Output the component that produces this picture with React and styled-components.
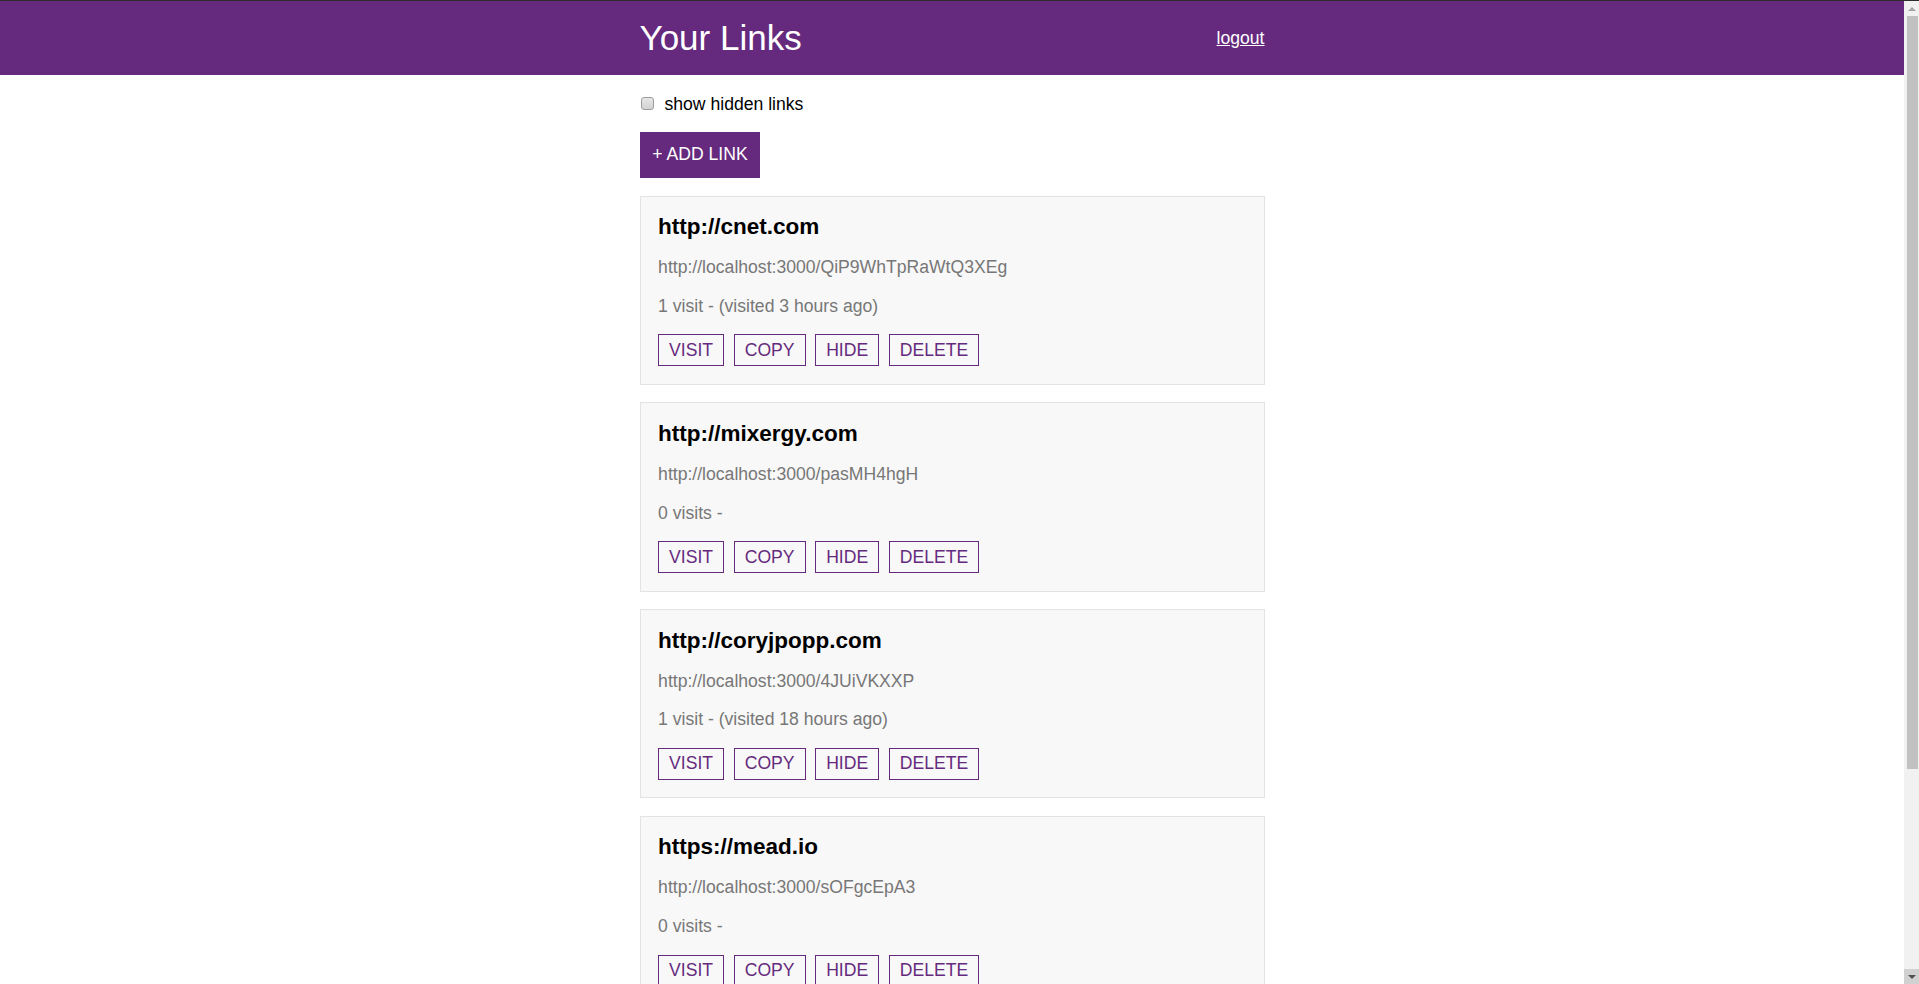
import React from "react";
import styled, { createGlobalStyle } from "styled-components";

const GlobalStyle = createGlobalStyle`
  html, body {
    margin: 0;
    padding: 0;
    background: #ffffff;
  }
  body {
    border-top: 1px solid #2d2d2d;
    padding-right: 15px;
    font-family: "Liberation Sans", Arial, Helvetica, sans-serif;
    font-size: 17.6px;
    color: #000;
  }
`;

const PURPLE = "#652a7e";

const Header = styled.header`
  background: ${PURPLE};
  height: 74px;
`;

const Wrapper = styled.div`
  width: 625px;
  margin: 0 auto;
`;

const HeaderBar = styled(Wrapper)`
  height: 100%;
  display: flex;
  align-items: center;
  justify-content: space-between;
`;

const Title = styled.h1`
  margin: 0;
  font-size: 35px;
  font-weight: 400;
  color: #fff;
`;

const LogoutLink = styled.a`
  color: #fff;
  font-size: 17.6px;
  text-decoration: underline;
  cursor: pointer;
`;

const Main = styled(Wrapper)`
  padding: 18.6px 0 16px;
`;

const CheckRow = styled.label`
  display: block;
  line-height: normal;
  margin: 0 0 17px;
`;

const CheckBox = styled.input`
  appearance: none;
  -webkit-appearance: none;
  box-sizing: border-box;
  margin: 0 11px 0 1px;
  width: 13px;
  height: 13px;
  border: 1px solid #9c9c9c;
  border-radius: 3px;
  background: linear-gradient(#e6e6e6, #d2d2d2);
  vertical-align: baseline;
`;

const AddButton = styled.button`
  display: block;
  font-family: inherit;
  font-size: 17.6px;
  color: #fff;
  background: ${PURPLE};
  border: none;
  padding: 12.5px 12.8px;
  margin: 0 0 18px;
  cursor: pointer;
`;

const Card = styled.div`
  background: #f8f8f8;
  border: 1px solid #e3e3e3;
  padding: 17.6px;
  margin-bottom: 17.6px;
`;

const LinkTitle = styled.h2`
  margin: 0 0 16.9px;
  font-size: 22.5px;
  font-weight: 700;
  color: #000;
`;

const ShortUrl = styled.p`
  margin: 0 0 17.8px;
  color: #777;
`;

const VisitInfo = styled.p`
  margin: 0;
  color: #777;
`;

const Actions = styled.div`
  display: flex;
  gap: 9.6px;
  margin-top: 17.5px;
`;

const ActionButton = styled.button`
  font-family: inherit;
  font-size: 17.6px;
  color: ${PURPLE};
  background: transparent;
  border: 1px solid ${PURPLE};
  padding: 4.4px 10px;
  cursor: pointer;
`;

/* drawing of the browser's classic scrollbar at the right edge */
const ScrollRail = styled.div`
  position: fixed;
  top: 1px;
  right: 0;
  bottom: 0;
  width: 15px;
  background: #f1f1f1;
  display: flex;
  flex-direction: column;
`;

const ArrowButton = styled.div`
  height: 15px;
  flex: none;
  display: flex;
  align-items: center;
  justify-content: center;
  background: ${(p) => (p.$pressed ? "#d1d1d1" : "#f1f1f1")};
`;

const Triangle = styled.span`
  width: 0;
  height: 0;
  border-left: 4px solid transparent;
  border-right: 4px solid transparent;
  ${(p) =>
    p.$down
      ? `border-top: 4px solid ${p.$dark ? "#505050" : "#a3a3a3"};`
      : `border-bottom: 4px solid ${p.$dark ? "#505050" : "#a3a3a3"};`}
`;

const Track = styled.div`
  flex: 1;
  padding: 0 1px 0 3px;
`;

const Thumb = styled.div`
  height: 753px;
  background: #c1c1c1;
`;

const links = [
  { url: "http://cnet.com", short: "http://localhost:3000/QiP9WhTpRaWtQ3XEg", visits: "1 visit - (visited 3 hours ago)" },
  { url: "http://mixergy.com", short: "http://localhost:3000/pasMH4hgH", visits: "0 visits -" },
  { url: "http://coryjpopp.com", short: "http://localhost:3000/4JUiVKXXP", visits: "1 visit - (visited 18 hours ago)" },
  { url: "https://mead.io", short: "http://localhost:3000/sOFgcEpA3", visits: "0 visits -" },
  { url: "http://google.com", short: "http://localhost:3000/kT7pWq2Lm", visits: "0 visits -" },
];

function LinkCard({ link }) {
  return (
    <Card>
      <LinkTitle>{link.url}</LinkTitle>
      <ShortUrl>{link.short}</ShortUrl>
      <VisitInfo>{link.visits}</VisitInfo>
      <Actions>
        <ActionButton>VISIT</ActionButton>
        <ActionButton>COPY</ActionButton>
        <ActionButton>HIDE</ActionButton>
        <ActionButton>DELETE</ActionButton>
      </Actions>
    </Card>
  );
}

export default function App() {
  return (
    <>
      <GlobalStyle />
      <Header>
        <HeaderBar>
          <Title>Your Links</Title>
          <LogoutLink>logout</LogoutLink>
        </HeaderBar>
      </Header>
      <Main>
        <CheckRow>
          <CheckBox type="checkbox" />
          show hidden links
        </CheckRow>
        <AddButton>+ ADD LINK</AddButton>
        {links.map((l) => (
          <LinkCard key={l.url} link={l} />
        ))}
      </Main>
      <ScrollRail aria-hidden="true">
        <ArrowButton>
          <Triangle />
        </ArrowButton>
        <Track>
          <Thumb />
        </Track>
        <ArrowButton $pressed>
          <Triangle $down $dark />
        </ArrowButton>
      </ScrollRail>
    </>
  );
}
